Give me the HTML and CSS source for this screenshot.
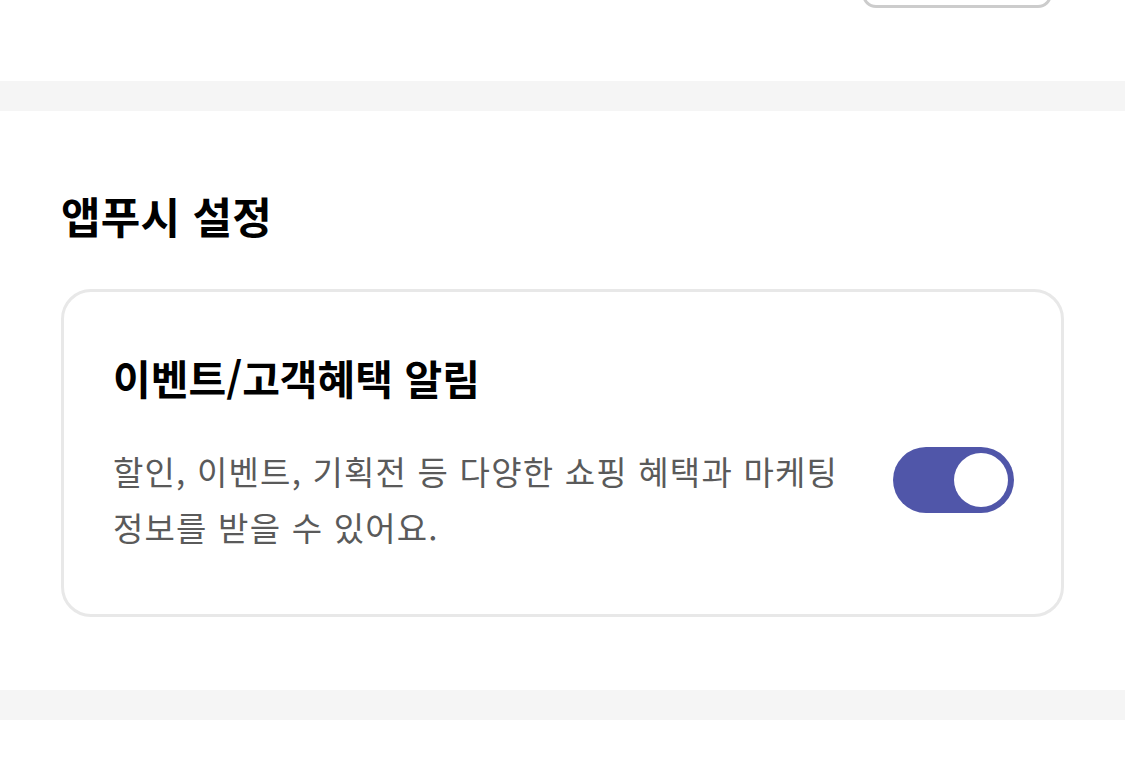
FILE: index.html
```html
<!DOCTYPE html>
<html lang="ko">
<head>
<meta charset="utf-8">
<link rel="stylesheet" href="styles.css">
</head>
<body>
<div class="top">
  <div class="top-btn"></div>
</div>
<div class="divider"></div>
<section class="section">
  <h2 class="section-title">앱푸시 설정</h2>
  <div class="card">
    <h3 class="card-title">이벤트/고객혜택 알림</h3>
    <div class="card-row">
      <p class="card-desc">할인, 이벤트, 기획전 등 다양한 쇼핑 혜택과 마케팅 정보를 받을 수 있어요.</p>
      <div class="toggle on" role="switch" aria-checked="true"><span class="knob"></span></div>
    </div>
  </div>
</section>
<div class="divider"></div>
<div class="bottom"></div>
</body>
</html>
```
FILE: styles.css
```css
* { box-sizing: border-box; }
html, body { margin: 0; padding: 0; background: #fff; }
body {
  font-family: "Noto Sans CJK KR", "Noto Sans", sans-serif;
  color: #000;
  width: 1125px;
  overflow: hidden;
}
.top {
  height: 81px;
  display: flex;
  justify-content: flex-end;
  padding-right: 73px;
}
.top-btn {
  width: 190px;
  height: 60px;
  margin-top: -52px;
  border: 3px solid #cccccc;
  border-radius: 14px;
}
.divider {
  height: 30px;
  background: #f5f5f5;
}
.section {
  padding: 76px 61px 73px 61px;
}
.section-title {
  margin: 0 0 46px 0;
  font-size: 43px;
  line-height: 56px;
  font-weight: 700;
  letter-spacing: 0.2px;
}
.card {
  border: 3px solid #e8e8e8;
  border-radius: 30px;
  padding: 59px 47px 59px 49px;
}
.card-title {
  margin: 0;
  font-size: 41px;
  line-height: 52px;
  font-weight: 700;
}
.card-row {
  display: flex;
  align-items: flex-start;
  gap: 40px;
  margin-top: 40px;
}
.card-desc {
  flex: 1;
  margin: 0;
  font-size: 33px;
  line-height: 56px;
  letter-spacing: 1.2px;
  color: #5a5a5a;
  word-break: keep-all;
}
.toggle {
  flex: none;
  width: 121px;
  height: 66px;
  margin-top: 4px;
  border-radius: 33px;
  background: #5056a9;
  display: flex;
  align-items: center;
  justify-content: flex-end;
  padding-right: 6px;
}
.knob {
  width: 54px;
  height: 54px;
  border-radius: 50%;
  background: #fff;
}
.bottom { height: 64px; }
```
